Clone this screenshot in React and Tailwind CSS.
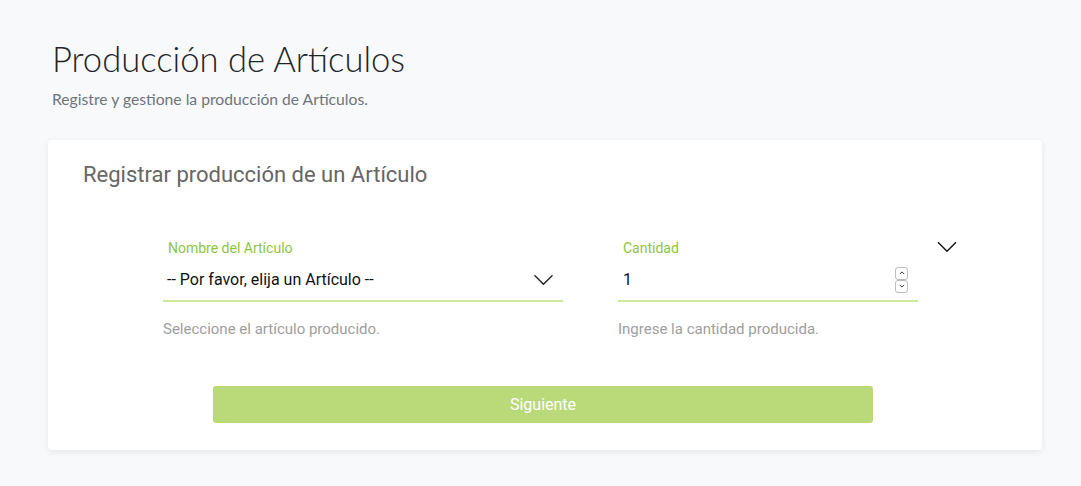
import React from "react";

const Chevron = ({ className }) => (
  <svg viewBox="0 0 24 14" className={className} fill="none" stroke="currentColor" strokeWidth="1.6">
    <path d="M1.5 1.5 L12 12 L22.5 1.5" />
  </svg>
);

export default function App() {
  return (
    <div className="min-h-[486px] bg-[#f8f9fa] pt-[37px] pb-[36px]" style={{ fontFamily: "Roboto, sans-serif" }}>
      <div className="pl-[52px]">
        <h1 className="text-[34.6px] leading-[44px] font-light text-[#212529]" style={{ fontFamily: "Lato, sans-serif" }}>
          Producción de Artículos
        </h1>
        <p className="mt-[8px] text-[15.7px] leading-[20px] text-[#6c757d]" style={{ fontFamily: "Lato, sans-serif" }}>
          Registre y gestione la producción de Artículos.
        </p>
      </div>

      <div className="ml-[48px] mt-[31px] w-[994px] rounded-[4px] bg-white shadow-[0_2px_6px_rgba(0,0,0,0.08)] pt-[21px] pb-[27px]">
        <h2 className="pl-[35px] text-[22px] leading-[28px] text-[#666]">Registrar producción de un Artículo</h2>

        <div className="mt-[50px] flex pl-[115px]">
          <div className="w-[400px]">
            <label className="block text-[14px] leading-[18px] text-[#8cc63f] pl-[5px]">Nombre del Artículo</label>
            <div className="mt-[2px] flex h-[43px] items-center justify-between border-b-2 border-[#cde89a] pl-[4px] pr-[9px]">
              <span className="text-[16px] text-[#111]">-- Por favor, elija un Artículo --</span>
              <Chevron className="w-[21px] h-[12px] text-[#222]" />
            </div>
            <p className="mt-[17px] text-[15px] leading-[20px] text-[#9e9e9e]">Seleccione el artículo producido.</p>
          </div>

          <div className="ml-[55px] w-[300px]">
            <label className="block text-[14px] leading-[18px] text-[#8cc63f] pl-[5px]">Cantidad</label>
            <div className="mt-[2px] flex h-[43px] items-center justify-between border-b-2 border-[#cde89a] pl-[5px] pr-[10px]">
              <span className="text-[16px] text-[#111]">1</span>
              <div className="flex flex-col">
                <span className="flex h-[13px] w-[13px] items-center justify-center rounded-[3px] border border-[#bbb]">
                  <svg viewBox="0 0 8 5" className="w-[6px] h-[4px]" fill="none" stroke="#333" strokeWidth="1.3"><path d="M1 4 L4 1 L7 4" /></svg>
                </span>
                <span className="flex h-[13px] w-[13px] items-center justify-center rounded-[3px] border border-[#bbb]">
                  <svg viewBox="0 0 8 5" className="w-[6px] h-[4px]" fill="none" stroke="#333" strokeWidth="1.3"><path d="M1 1 L4 4 L7 1" /></svg>
                </span>
              </div>
            </div>
            <p className="mt-[17px] text-[15px] leading-[20px] text-[#9e9e9e]">Ingrese la cantidad producida.</p>
          </div>

          <div className="ml-[18px] pt-[2px]">
            <Chevron className="w-[22px] h-[12px] text-[#111]" />
          </div>
        </div>

        <div className="mt-[47px] flex pl-[165px]">
          <button className="h-[37px] w-[660px] rounded-[3px] bg-[#bad979] text-[16px] text-white">Siguiente</button>
        </div>
      </div>
    </div>
  );
}
